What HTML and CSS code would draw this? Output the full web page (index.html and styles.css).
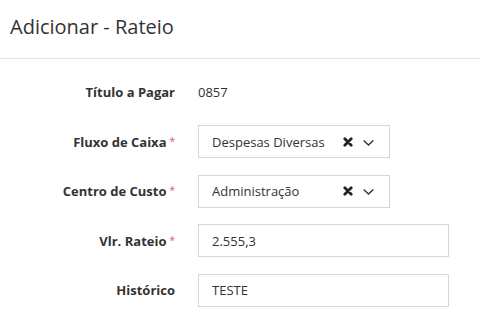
FILE: index.html
```html
<!DOCTYPE html>
<html lang="pt-BR">
<head>
  <meta charset="UTF-8" />
  <meta name="viewport" content="width=device-width, initial-scale=1.0" />
  <title>Adicionar - Rateio</title>
  <link rel="stylesheet" href="styles.css">
</head>
<body>

  <div class="modal">
    <div class="modal-header">
      <h4 class="modal-title">Adicionar - Rateio</h4>
    </div>

    <form class="modal-body">
      <div class="form-row">
        <label class="control-label">Título a Pagar</label>
        <div class="static-value">0857</div>
      </div>

      <div class="form-row">
        <label class="control-label">Fluxo de Caixa<span class="req">*</span></label>
        <div class="select">
          <span class="select-text">Despesas Diversas</span>
          <span class="select-clear">
            <svg width="10" height="10" viewBox="0 0 10 10"><path d="M1.8 1.8 L8.2 8.2 M8.2 1.8 L1.8 8.2" stroke="#222" stroke-width="2.8" stroke-linecap="round"/></svg>
          </span>
          <span class="select-arrow">
            <svg width="11" height="8" viewBox="0 0 11 8"><path d="M0.7 2.6 L5.5 7 L10.3 2.6" fill="none" stroke="#333" stroke-width="1.4"/></svg>
          </span>
        </div>
      </div>

      <div class="form-row">
        <label class="control-label">Centro de Custo<span class="req">*</span></label>
        <div class="select">
          <span class="select-text">Administração</span>
          <span class="select-clear">
            <svg width="10" height="10" viewBox="0 0 10 10"><path d="M1.8 1.8 L8.2 8.2 M8.2 1.8 L1.8 8.2" stroke="#222" stroke-width="2.8" stroke-linecap="round"/></svg>
          </span>
          <span class="select-arrow">
            <svg width="11" height="8" viewBox="0 0 11 8"><path d="M0.7 2.6 L5.5 7 L10.3 2.6" fill="none" stroke="#333" stroke-width="1.4"/></svg>
          </span>
        </div>
      </div>

      <div class="form-row">
        <label class="control-label">Vlr. Rateio<span class="req">*</span></label>
        <input type="text" class="form-control" value="2.555,3" />
      </div>

      <div class="form-row">
        <label class="control-label">Histórico</label>
        <input type="text" class="form-control" value="TESTE" />
      </div>
    </form>
  </div>

</body>
</html>
```

FILE: styles.css
```css
* {
  box-sizing: border-box;
}

html, body {
  margin: 0;
  padding: 0;
  background: #fff;
  font-family: 'Open Sans', 'Noto Sans', sans-serif;
  color: #333;
}

.modal-header {
  height: 59px;
  padding: 13px 10px 0;
  border-bottom: 1px solid #e3e3e3;
}

.modal-title {
  margin: 0;
  font-size: 20px;
  font-weight: 400;
  line-height: 27px;
  color: #333;
}

.modal-body {
  padding-top: 16.5px;
}

.form-row {
  display: grid;
  grid-template-columns: 175px 1fr;
  column-gap: 23px;
  align-items: center;
  min-height: 33px;
  margin-bottom: 16.5px;
}

.control-label {
  text-align: right;
  font-size: 13px;
  font-weight: 700;
  color: #333;
}

.req {
  color: #e0555a;
  font-size: 10px;
  font-weight: 400;
  vertical-align: top;
  position: relative;
  top: 1px;
  margin-left: 3px;
}

.static-value {
  font-size: 13px;
}

.select {
  width: 192px;
  height: 33px;
  border: 1px solid #d2d6de;
  display: flex;
  align-items: center;
  padding: 0 15px 0 13px;
  font-size: 13px;
}

.select-text {
  flex: 1;
}

.select-clear {
  display: flex;
  margin-right: 10px;
}

.select-arrow {
  display: flex;
}

.form-control {
  width: 251px;
  height: 33px;
  border: 1px solid #d2d6de;
  border-radius: 0;
  padding: 0 13px;
  font-family: 'Open Sans', 'Noto Sans', sans-serif;
  font-size: 13px;
  color: #333;
  outline: none;
}
```
